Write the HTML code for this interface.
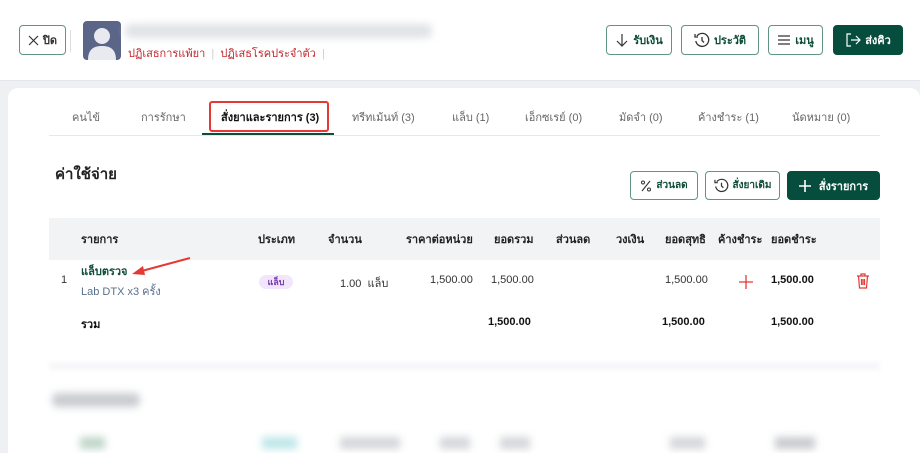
<!DOCTYPE html>
<html><head><meta charset="utf-8"><style>
*{box-sizing:border-box;margin:0;padding:0}
html,body{width:920px;height:453px;overflow:hidden}
body{background:#eef0f4;font-family:"Liberation Sans","Noto Sans CJK SC",sans-serif;color:#222;position:relative}
.a{position:absolute;white-space:nowrap}
.hdr{position:absolute;left:0;top:0;width:920px;height:81px;background:#fff;border-bottom:1px solid #e3e6ea}
.btn{position:absolute;border:1px solid #5f9587;border-radius:4px;background:#fff;color:#0f4c3a;font-size:11px;font-weight:bold;display:flex;align-items:center;justify-content:center;gap:4px}
.dk{background:#064d3d;color:#fff;border-color:#064d3d}
.card{position:absolute;left:8px;top:88px;width:912px;height:365px;background:#fff;border-radius:10px 10px 0 0}
.tab{position:absolute;top:108px;font-size:11px;color:#666}
.th{position:absolute;top:230px;font-size:11px;font-weight:bold;color:#222}
.td{position:absolute;font-size:11px;color:#333}
.b{font-weight:bold;color:#111}
</style></head><body>
<div class="hdr"></div>
<div class="btn" style="left:19px;top:25px;width:47px;height:30px"><svg width="11" height="11" viewBox="0 0 11 11"><path d="M1 1L10 10M10 1L1 10" stroke="#333" stroke-width="1.2"/></svg><span style="color:#333">ปิด</span></div>
<div class="a" style="left:70px;top:30px;width:1px;height:22px;background:#ddd"></div>
<div class="a" style="left:83px;top:21px;width:38px;height:39px;background:#5a6587;border-radius:4px;overflow:hidden"><svg width="38" height="39"><circle cx="19" cy="15" r="8" fill="#e8eaf0"/><path d="M5 39C5 28 11 25 19 25C27 25 33 28 33 39Z" fill="#e8eaf0"/></svg></div>
<div class="a" style="left:125px;top:24px;width:307px;height:14px;background:#e0e2e6;filter:blur(4px);border-radius:6px"></div>
<div class="a" style="left:128px;top:44px;font-size:11px;color:#c0282e">ปฏิเสธการแพ้ยา <span style="color:#ccc">&nbsp;|&nbsp;</span> ปฏิเสธโรคประจำตัว <span style="color:#ccc">&nbsp;|</span></div>
<div class="btn" style="left:606px;top:25px;width:66px;height:30px"><svg width="14" height="14" viewBox="0 0 14 14"><path d="M7 1V13M2 8L7 13L12 8" stroke="#333" stroke-width="1.2" fill="none"/></svg>รับเงิน</div>
<div class="btn" style="left:681px;top:25px;width:78px;height:30px"><svg width="16" height="16" viewBox="0 0 16 16"><path d="M3 4A6.5 6.5 0 1 1 1.8 9" stroke="#333" stroke-width="1.3" fill="none"/><path d="M1 2V5H4M8 5V8.5L10 10.5" stroke="#333" stroke-width="1.3" fill="none"/></svg>ประวัติ</div>
<div class="btn" style="left:768px;top:25px;width:55px;height:30px"><svg width="14" height="12" viewBox="0 0 14 12"><path d="M1 2H13M1 6H13M1 10H13" stroke="#333" stroke-width="1.2"/></svg>เมนู</div>
<div class="btn dk" style="left:833px;top:25px;width:70px;height:30px"><svg width="16" height="14" viewBox="0 0 16 14"><path d="M6 1H2V13H6M6 7H15M11 3L15 7L11 11" stroke="#fff" stroke-width="1.2" fill="none"/></svg>ส่งคิว</div>
<div class="card"></div>
<div class="a" style="left:49px;top:135px;width:831px;height:1px;background:#e5e7eb"></div>
<div class="tab" style="left:72px">คนไข้</div>
<div class="tab" style="left:141px">การรักษา</div>
<div class="tab" style="left:221px;color:#111;font-weight:bold">สั่งยาและรายการ (3)</div>
<div class="a" style="left:202px;top:133px;width:132px;height:2px;background:#0f4c3a"></div>
<div class="a" style="left:209px;top:101px;width:120px;height:31px;border:2px solid #e53935;border-radius:3px"></div>
<div class="tab" style="left:352px">ทรีทเม้นท์ (3)</div>
<div class="tab" style="left:452px">แล็บ (1)</div>
<div class="tab" style="left:525px">เอ็กซเรย์ (0)</div>
<div class="tab" style="left:619px">มัดจำ (0)</div>
<div class="tab" style="left:698px">ค้างชำระ (1)</div>
<div class="tab" style="left:792px">นัดหมาย (0)</div>
<div class="a" style="left:55px;top:162px;font-size:15px;font-weight:bold;color:#222">ค่าใช้จ่าย</div>
<div class="btn" style="left:630px;top:171px;width:68px;height:29px;font-size:10px"><svg width="12" height="12" viewBox="0 0 12 12"><path d="M10 1L2 11" stroke="#333" stroke-width="1.1"/><circle cx="3" cy="2.5" r="1.5" stroke="#333" fill="none"/><circle cx="9" cy="9.5" r="1.5" stroke="#333" fill="none"/></svg>ส่วนลด</div>
<div class="btn" style="left:705px;top:171px;width:75px;height:29px;font-size:10px"><svg width="15" height="15" viewBox="0 0 16 16"><path d="M3 4A6.5 6.5 0 1 1 1.8 9" stroke="#333" stroke-width="1.3" fill="none"/><path d="M1 2V5H4M8 5V8.5L10 10.5" stroke="#333" stroke-width="1.3" fill="none"/></svg>สั่งยาเดิม</div>
<div class="btn dk" style="left:787px;top:171px;width:93px;height:29px;gap:8px"><svg width="12" height="12" viewBox="0 0 12 12"><path d="M6 0V12M0 6H12" stroke="#fff" stroke-width="1.6"/></svg>สั่งรายการ</div>
<div class="a" style="left:49px;top:218px;width:831px;height:42px;background:#f2f3f5"></div>
<div class="th" style="left:81px">รายการ</div>
<div class="th" style="left:258px">ประเภท</div>
<div class="th" style="left:328px">จำนวน</div>
<div class="th" style="left:406px">ราคาต่อหน่วย</div>
<div class="th" style="left:494px">ยอดรวม</div>
<div class="th" style="left:556px">ส่วนลด</div>
<div class="th" style="left:616px">วงเงิน</div>
<div class="th" style="left:665px">ยอดสุทธิ</div>
<div class="th" style="left:718px">ค้างชำระ</div>
<div class="th" style="left:771px">ยอดชำระ</div>
<div class="td" style="left:61px;top:274px">1</div>
<div class="td" style="left:81px;top:262px;font-weight:bold;color:#0f4c3a">แล็บตรวจ</div>
<div class="td" style="left:81px;top:282px;color:#5a6f8a">Lab DTX x3 ครั้ง</div>
<svg class="a" style="left:130px;top:255px" width="65" height="22"><path d="M60 3L8 17" stroke="#e53935" stroke-width="2"/><path d="M2 19L13 11L15 20Z" fill="#e53935"/></svg>
<div class="a" style="left:259px;top:275px;width:34px;height:14px;border-radius:7px;background:#f1e6fb;color:#7b3fb0;font-size:9px;font-weight:bold;text-align:center;line-height:14px">แล็บ</div>
<div class="td" style="left:340px;top:274px">1.00&nbsp; แล็บ</div>
<div class="td" style="left:430px;top:274px">1,500.00</div>
<div class="td" style="left:491px;top:274px">1,500.00</div>
<div class="td" style="left:665px;top:274px">1,500.00</div>
<svg class="a" style="left:739px;top:275px" width="14" height="14"><path d="M7 0V14M0 7H14" stroke="#e53935" stroke-width="1.3"/></svg>
<div class="td b" style="left:771px;top:274px">1,500.00</div>
<svg class="a" style="left:856px;top:273px" width="14" height="16" viewBox="0 0 14 16"><path d="M1 3H13M5 3V1H9V3M2.5 3L3.5 15H10.5L11.5 3M5.5 6V12M7 6V12M8.5 6V12" stroke="#e53935" stroke-width="1.2" fill="none"/></svg>
<div class="td b" style="left:81px;top:315px">รวม</div>
<div class="td b" style="left:488px;top:316px">1,500.00</div>
<div class="td b" style="left:662px;top:316px">1,500.00</div>
<div class="td b" style="left:771px;top:316px">1,500.00</div>
<div class="a" style="left:49px;top:362px;width:831px;height:8px;background:#f6f7f9;filter:blur(2px)"></div>
<div class="a" style="left:52px;top:393px;width:88px;height:14px;background:#c9cbd0;filter:blur(4px);border-radius:6px"></div>
<div class="a" style="left:80px;top:437px;width:25px;height:12px;background:#bfd6c9;filter:blur(4px)"></div>
<div class="a" style="left:262px;top:437px;width:35px;height:12px;background:#bfe6e8;filter:blur(4px)"></div>
<div class="a" style="left:340px;top:437px;width:60px;height:12px;background:#d4d6da;filter:blur(4px)"></div>
<div class="a" style="left:440px;top:437px;width:30px;height:12px;background:#d4d6da;filter:blur(4px)"></div>
<div class="a" style="left:500px;top:437px;width:30px;height:12px;background:#d4d6da;filter:blur(4px)"></div>
<div class="a" style="left:670px;top:437px;width:35px;height:12px;background:#d4d6da;filter:blur(4px)"></div>
<div class="a" style="left:775px;top:437px;width:40px;height:12px;background:#c8cacf;filter:blur(4px)"></div>
</body></html>
